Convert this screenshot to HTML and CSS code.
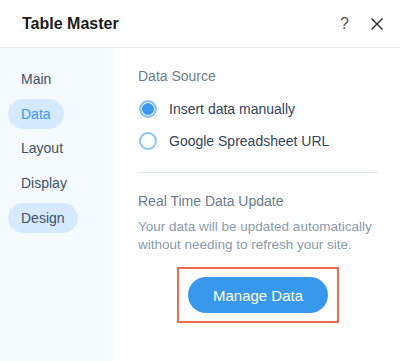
FILE: index.html
```html
<!DOCTYPE html>
<html>
  <head>
    <meta charset="UTF-8">
    <meta name="viewport" content="width=device-width, initial-scale=1.0">
    <title>Table Master</title>
    <link rel="stylesheet" href="styles.css">
  </head>
  <body>
    <div class="panel">
      <header class="panel-header">
        <h1>Table Master</h1>
        <div class="header-actions">
          <span class="help">?</span>
          <svg class="close" width="14" height="14" viewBox="0 0 14 14">
            <path d="M1.5 1.5 L12.5 12.5 M12.5 1.5 L1.5 12.5" stroke="#2b2b2b" stroke-width="1.4" fill="none"/>
          </svg>
        </div>
      </header>

      <div class="panel-body">
        <nav class="sidebar">
          <a class="nav-item">Main</a>
          <a class="nav-item active">Data</a>
          <a class="nav-item">Layout</a>
          <a class="nav-item">Display</a>
          <a class="nav-item hover">Design</a>
        </nav>

        <main class="content">
          <section class="section">
            <p class="section-title">Data Source</p>
            <label class="radio-row">
              <span class="radio checked"></span>
              <span>Insert data manually</span>
            </label>
            <label class="radio-row">
              <span class="radio"></span>
              <span>Google Spreadsheet URL</span>
            </label>
          </section>

          <div class="divider"></div>

          <section class="section">
            <p class="section-title">Real Time Data Update</p>
            <p class="description">Your data will be updated automatically without needing to refresh your site.</p>
            <div class="button-container">
              <div class="highlight">
                <button class="button">Manage Data</button>
              </div>
            </div>
          </section>
        </main>
      </div>
    </div>
  </body>
</html>
```

FILE: styles.css
```css
body {
  margin: 0;
  padding: 0;
  font-family: 'Liberation Sans', Arial, sans-serif;
  background-color: #fff;
}
.panel {
  width: 400px;
  height: 361px;
  display: flex;
  flex-direction: column;
  overflow: hidden;
}
.panel-header {
  height: 47px;
  border-bottom: 1px solid #e3e6ea;
  display: flex;
  align-items: center;
  justify-content: space-between;
  padding: 0 16px 0 22px;
  flex-shrink: 0;
}
.panel-header h1 {
  margin: 0;
  font-size: 16px;
  font-weight: bold;
  color: #1b1b1b;
}
.header-actions {
  display: flex;
  align-items: center;
  gap: 21px;
}
.help {
  font-size: 16px;
  color: #555;
}
.close {
  display: block;
}
.panel-body {
  flex: 1;
  display: flex;
}
.sidebar {
  width: 114px;
  background-color: #f5faff;
  display: flex;
  flex-direction: column;
  padding: 16px 0 0 8px;
  gap: 4.7px;
  box-sizing: border-box;
}
.nav-item {
  align-self: flex-start;
  padding: 0 13px;
  height: 30px;
  line-height: 30px;
  font-size: 14px;
  color: #3d5166;
  border-radius: 15px;
}
.nav-item.active {
  background-color: #d6eaff;
  color: #3899ec;
}
.nav-item.hover {
  background-color: #d6eaff;
}
.content {
  flex: 1;
  padding: 0 22px 0 24px;
}
.section-title {
  margin: 0;
  font-size: 14px;
  color: #6a7d90;
}
.section:first-child .section-title {
  padding-top: 20px;
  margin-bottom: 9px;
}
.radio-row {
  display: flex;
  align-items: center;
  gap: 12px;
  height: 32px;
  font-size: 14px;
  color: #32445a;
}
.radio {
  width: 14px;
  height: 14px;
  border: 2px solid #89c2f5;
  border-radius: 50%;
  flex-shrink: 0;
  margin-left: 1px;
}
.radio.checked {
  background-color: #3899ec;
  box-shadow: inset 0 0 0 1px #fff;
}
.divider {
  height: 1px;
  background-color: #e3e8ee;
  margin: 15px 0 20px 0;
}
.description {
  margin: 9px -14px 0 0;
  font-size: 13.5px;
  line-height: 18px;
  color: #8a9bac;
}
.button-container {
  display: flex;
  justify-content: center;
  margin-top: 13px;
}
.highlight {
  border: 2px solid #f2694e;
  padding: 8px 9px;
}
.button {
  display: block;
  width: 140px;
  height: 36px;
  border: none;
  border-radius: 18px;
  background-color: #3899ec;
  color: #fff;
  font-family: 'Liberation Sans', Arial, sans-serif;
  font-size: 15px;
  cursor: pointer;
}
```
